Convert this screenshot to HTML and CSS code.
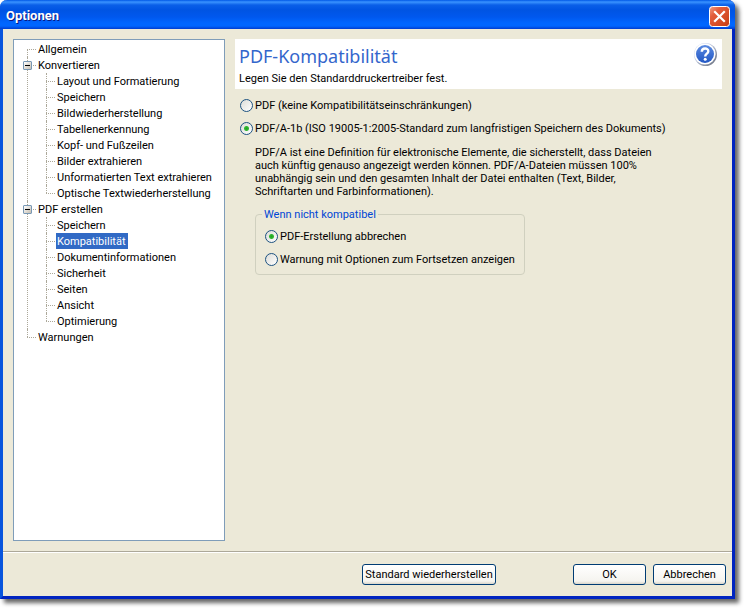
FILE: index.html
```html
<!DOCTYPE html>
<html lang="de">
<head>
    <meta charset="UTF-8">
    <meta name="viewport" content="width=device-width, initial-scale=1.0">
    <title>Optionen</title>
    <link rel="stylesheet" href="styles.css">
</head>
<body>
    <div class="window">
        <header class="titlebar">
            <h1>Optionen</h1>
            <button class="close" type="button" aria-label="Schließen">
                <svg width="21" height="21" viewBox="0 0 21 21">
                    <defs>
                        <linearGradient id="red" x1="0" y1="0" x2="1" y2="1">
                            <stop offset="0" stop-color="#f0a088"/>
                            <stop offset="0.3" stop-color="#e35d3c"/>
                            <stop offset="1" stop-color="#c83c10"/>
                        </linearGradient>
                    </defs>
                    <rect x="0.5" y="0.5" width="20" height="20" rx="3" fill="url(#red)" stroke="#fff"/>
                    <path d="M6 6l9 9M15 6l-9 9" stroke="#fff" stroke-width="2.2" stroke-linecap="square"/>
                </svg>
            </button>
        </header>

        <div class="content">
            <nav class="tree">
                <ul>
                    <li><a href="#">Allgemein</a></li>
                    <li>
                        <button class="toggle" type="button" aria-label="Konvertieren zuklappen"></button>
                        <a href="#">Konvertieren</a>
                        <ul>
                            <li><a href="#">Layout und Formatierung</a></li>
                            <li><a href="#">Speichern</a></li>
                            <li><a href="#">Bildwiederherstellung</a></li>
                            <li><a href="#">Tabellenerkennung</a></li>
                            <li><a href="#">Kopf- und Fußzeilen</a></li>
                            <li><a href="#">Bilder extrahieren</a></li>
                            <li><a href="#">Unformatierten Text extrahieren</a></li>
                            <li><a href="#">Optische Textwiederherstellung</a></li>
                        </ul>
                    </li>
                    <li>
                        <button class="toggle" type="button" aria-label="PDF erstellen zuklappen"></button>
                        <a href="#">PDF erstellen</a>
                        <ul>
                            <li><a href="#">Speichern</a></li>
                            <li><a class="selected" href="#">Kompatibilität</a></li>
                            <li><a href="#">Dokumentinformationen</a></li>
                            <li><a href="#">Sicherheit</a></li>
                            <li><a href="#">Seiten</a></li>
                            <li><a href="#">Ansicht</a></li>
                            <li><a href="#">Optimierung</a></li>
                        </ul>
                    </li>
                    <li><a href="#">Warnungen</a></li>
                </ul>
            </nav>

            <main class="page">
                <div class="banner">
                    <div>
                        <h2>PDF-Kompatibilität</h2>
                        <p>Legen Sie den Standarddruckertreiber fest.</p>
                    </div>
                    <button class="help" type="button" aria-label="Hilfe">
                        <svg width="25" height="25" viewBox="0 0 25 25">
                            <defs>
                                <linearGradient id="ring" x1="0" y1="0" x2="1" y2="1">
                                    <stop offset="0.3" stop-color="#cfd8ee"/>
                                    <stop offset="1" stop-color="#5f6675"/>
                                </linearGradient>
                                <linearGradient id="blue" x1="0" y1="0" x2="0" y2="1">
                                    <stop offset="0" stop-color="#5b8ae0"/>
                                    <stop offset="1" stop-color="#2257c4"/>
                                </linearGradient>
                            </defs>
                            <circle cx="12.5" cy="12.5" r="11.5" fill="url(#ring)"/>
                            <circle cx="12" cy="12" r="10.6" fill="#fff"/>
                            <circle cx="12" cy="12" r="9" fill="url(#blue)"/>
                            <path d="M8.8 9.8C8.8 5.4 15.3 5.6 15.3 9.2C15.3 11.6 12.2 11.6 12.2 14.4" fill="none" stroke="#fff" stroke-width="2.4"/>
                            <circle cx="12.2" cy="17.3" r="1.5" fill="#fff"/>
                        </svg>
                    </button>
                </div>

                <form class="options">
                    <label><input type="radio" name="format">PDF (keine Kompatibilitätseinschränkungen)</label>
                    <label><input type="radio" name="format" checked>PDF/A-1b (ISO 19005-1:2005-Standard zum langfristigen Speichern des Dokuments)</label>
                    <p class="description">
                        PDF/A ist eine Definition für elektronische Elemente, die sicherstellt, dass Dateien<br>
                        auch künftig genauso angezeigt werden können. PDF/A-Dateien müssen 100%<br>
                        unabhängig sein und den gesamten Inhalt der Datei enthalten (Text, Bilder,<br>
                        Schriftarten und Farbinformationen).
                    </p>
                    <fieldset>
                        <legend>Wenn nicht kompatibel</legend>
                        <label><input type="radio" name="fallback" checked>PDF-Erstellung abbrechen</label>
                        <label><input type="radio" name="fallback">Warnung mit Optionen zum Fortsetzen anzeigen</label>
                    </fieldset>
                </form>
            </main>
        </div>

        <footer class="buttons">
            <button class="btn reset" type="button">Standard wiederherstellen</button>
            <button class="btn" type="button">OK</button>
            <button class="btn" type="button">Abbrechen</button>
        </footer>
    </div>
</body>
</html>
```
FILE: styles.css
```css
* {
    box-sizing: border-box;
}

body {
    margin: 0;
    padding: 0 10px 10px 0;
    min-height: 100vh;
    display: flex;
    background: #fff;
    color: #000;
    font: 11px/13px Tahoma, Roboto, sans-serif;
}

h1, h2, p, ul {
    margin: 0;
    padding: 0;
}

button {
    font: inherit;
    color: inherit;
    padding: 0;
}

/* window frame */
.window {
    flex: 1;
    display: flex;
    flex-direction: column;
    background: #ece9d8;
    border: 3px solid #0831d9;
    border-top: 0;
    border-color: #0831d9 #0024c0 #0024c0 #0855dd;
    border-radius: 7px 7px 0 0;
    box-shadow: 4px 4px 4px rgba(0, 0, 0, 0.6);
}

.titlebar {
    display: flex;
    align-items: center;
    justify-content: space-between;
    height: 29px;
    margin: 0 -3px;
    padding: 3px 5px 0 6px;
    border-radius: 7px 7px 0 0;
    background: linear-gradient(#0058e6 0, #3a93ff 2px, #0a5fe8 5px, #0054e3 10px, #0058ee 17px, #0066ff 23px, #0066ff 26px, #003dd0 29px);
}

.titlebar h1 {
    color: #fff;
    font: bold 13px/16px "Trebuchet MS", Roboto, sans-serif;
    text-shadow: 1px 1px #0a1883;
}

.close, .help {
    border: 0;
    background: none;
}

.close svg, .help svg {
    display: block;
}

.content {
    flex: 1;
    display: flex;
    gap: 10px;
    padding: 10px;
}

/* tree on the left */
.tree {
    flex: none;
    width: 212px;
    padding: 1px 0 1px 13px;
    background: #fff;
    border: 1px solid #7f9db9;
    white-space: nowrap;
}

.tree ul {
    list-style: none;
}

.tree ul ul {
    margin-left: 9px;
}

.tree li {
    position: relative;
    padding-left: 10px;
    line-height: 16px;
}

.tree li::before {
    content: "";
    position: absolute;
    left: 0;
    top: 0;
    bottom: 0;
    border-left: 1px dotted #aca899;
}

.tree li::after {
    content: "";
    position: absolute;
    left: 0;
    top: 8px;
    width: 9px;
    border-top: 1px dotted #aca899;
}

.tree > ul > li:first-child::before {
    top: 8px;
}

.tree li:last-child::before {
    bottom: auto;
    height: 8px;
}

.tree a {
    display: block;
    width: max-content;
    height: 16px;
    padding: 1px 2px 0 1px;
    color: #000;
    text-decoration: none;
}

.tree a.selected {
    background: #316ac5;
    color: #fff;
}

.toggle {
    position: absolute;
    left: -4px;
    top: 4px;
    z-index: 1;
    width: 9px;
    height: 9px;
    border: 1px solid #7898b5;
    border-radius: 1px;
    background: linear-gradient(#000, #000) center / 5px 1px no-repeat, linear-gradient(135deg, #fff, #c6beb0);
}

/* settings page */
.page {
    flex: 1;
    min-width: 0;
}

.banner {
    display: flex;
    align-items: flex-start;
    justify-content: space-between;
    height: 50px;
    padding: 3px 4px;
    background: #fff;
}

.banner h2 {
    color: #3366cc;
    font: 18px/28px Tahoma, "Noto Sans", sans-serif;
    margin-bottom: 2px;
}

.options {
    padding: 10px 5px;
}

.options label {
    display: flex;
    align-items: center;
    gap: 2px;
    height: 13px;
    margin-bottom: 10px;
    white-space: nowrap;
}

input[type="radio"] {
    appearance: none;
    flex: none;
    width: 13px;
    height: 13px;
    margin: 0;
    border: 1px solid #1d5281;
    border-radius: 50%;
    background: linear-gradient(135deg, #dcdcd7, #fff);
}

input[type="radio"]:checked {
    background: radial-gradient(circle, #21a121 0, #33b833 2px, transparent 3px), linear-gradient(135deg, #dcdcd7, #fff);
}

.description {
    margin: 11px 0 10px 15px;
}

fieldset {
    width: 270px;
    min-width: 0;
    margin: 0 0 0 15px;
    padding: 9px 9px 0;
    border: 1px solid #d0d0bf;
    border-radius: 4px;
}

fieldset label:last-child {
    margin-bottom: 8px;
}

legend {
    margin-left: -3px;
    padding: 0 2px;
    color: #0046d5;
}

/* bottom row */
.buttons {
    display: flex;
    justify-content: flex-end;
    gap: 7px;
    padding: 12px 6px 11px;
    border-top: 1px solid #aca899;
    box-shadow: inset 0 1px #fff;
}

.btn {
    width: 73px;
    height: 21px;
    border: 1px solid #003c74;
    border-radius: 3px;
    background: linear-gradient(#fff, #f5f4ef 85%, #d9d5c9);
    white-space: nowrap;
}

.reset {
    width: 134px;
    margin-right: 70px;
}
```
